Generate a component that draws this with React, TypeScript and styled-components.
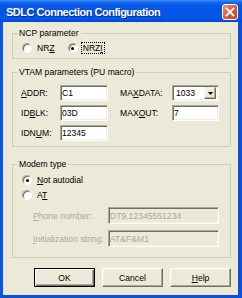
import React from "react";
import styled, { createGlobalStyle } from "styled-components";

const GlobalStyle = createGlobalStyle`
  html, body { margin: 0; padding: 0; background: #ffffff; }
  body { font-family: "Liberation Sans", Arial, sans-serif; }
  *, *::before, *::after { box-sizing: border-box; }
`;

const Window = styled.div`
  width: 242px;
  height: 298px;
  display: flex;
  flex-direction: column;
  background: linear-gradient(to right, #0831d9 0, #166aee 1px, #0a4fde 2px, #0a4fde 100%);
`;

const TitleBar = styled.div`
  height: 22px;
  flex: none;
  display: flex;
  align-items: center;
  justify-content: space-between;
  padding: 1px 4px 0 6px;
  background: linear-gradient(
    to bottom,
    #3d8ef5 0,
    #1a69ec 2px,
    #0659e8 5px,
    #0055e5 50%,
    #0057e9 85%,
    #0046d3 100%
  );
`;

const Title = styled.div`
  color: #ffffff;
  font-weight: bold;
  font-size: 11px;
  letter-spacing: -0.5px;
  text-shadow: 1px 1px 0 #0c2a9e;
  white-space: nowrap;
`;

const CloseButton = styled.div`
  width: 16px;
  height: 16px;
  border: 1px solid #ffffff;
  border-radius: 3px;
  background: linear-gradient(135deg, #f0906e 0%, #e1603d 45%, #c8401c 100%);
  display: flex;
  align-items: center;
  justify-content: center;
`;

const Body = styled.div`
  flex: 1;
  margin: 0 4px 3px 3px;
  background: #ece9d8;
  padding: 6px 7px 0 9px;
  display: flex;
  flex-direction: column;
  font-size: 8.6px;
  color: #000000;
`;

const Group = styled.fieldset<{ $mt: number }>`
  margin: ${(p) => p.$mt}px 0 0 0;
  padding: 0;
  border: 1px solid #cfcdbf;
  min-width: 0;
`;

const Legend = styled.legend`
  margin-left: 4px;
  padding: 0 2px;
  line-height: 10px;
  font-size: 8.6px;
`;

const RadioRow = styled.div`
  display: flex;
  align-items: center;
  gap: 11px;
  padding: 4px 0 4px 9px;
`;

const RadioList = styled.div`
  display: flex;
  flex-direction: column;
  gap: 3px;
  padding: 5px 0 0 9px;
`;

const RadioOption = styled.div`
  display: flex;
  align-items: center;
  gap: 3px;
  height: 12px;
`;

const RadioCircle = styled.span<{ $checked?: boolean }>`
  width: 10px;
  height: 10px;
  border-radius: 50%;
  background: #ffffff;
  border: 1px solid;
  border-color: #aca899 #ffffff #ffffff #aca899;
  box-shadow: inset 1px 1px 0 #716f64;
  display: inline-flex;
  align-items: center;
  justify-content: center;
  flex: none;
  &::after {
    content: "";
    width: 3px;
    height: 3px;
    border-radius: 50%;
    background: #000000;
    display: ${(p) => (p.$checked ? "block" : "none")};
  }
`;

const Caption = styled.span<{ $focus?: boolean }>`
  line-height: 10px;
  white-space: nowrap;
  padding: 0 1px;
  border: 1px dotted ${(p) => (p.$focus ? "#000000" : "transparent")};
`;

const ParamGrid = styled.div`
  display: grid;
  grid-template-columns: 39px 48px 64px 47px;
  grid-auto-rows: 16px;
  row-gap: 4px;
  align-items: center;
  padding: 8px 0 5px 8px;
`;

const FieldLabel = styled.span<{ $indent?: number; $disabled?: boolean }>`
  padding-left: ${(p) => p.$indent ?? 0}px;
  white-space: nowrap;
  line-height: 10px;
  color: ${(p) => (p.$disabled ? "#aca899" : "#000000")};
`;

const Edit = styled.input<{ $disabled?: boolean }>`
  width: 100%;
  height: 100%;
  margin: 0;
  padding: 0 1px;
  font-family: "Liberation Sans", Arial, sans-serif;
  font-size: 8.6px;
  color: ${(p) => (p.$disabled ? "#aca899" : "#000000")};
  background: ${(p) => (p.$disabled ? "#ece9d8" : "#ffffff")};
  border: 1px solid;
  border-color: #aca899 #ffffff #ffffff #aca899;
  box-shadow: inset 1px 1px 0 #716f64, inset -1px -1px 0 #f1efe2;
  outline: none;
`;

const Combo = styled.div`
  width: 100%;
  height: 100%;
  display: flex;
  align-items: center;
  justify-content: space-between;
  padding: 2px 2px 2px 3px;
  background: #ffffff;
  border: 1px solid;
  border-color: #aca899 #ffffff #ffffff #aca899;
  box-shadow: inset 1px 1px 0 #716f64, inset -1px -1px 0 #f1efe2;
`;

const ComboButton = styled.div`
  width: 12px;
  height: 12px;
  background: #ece9d8;
  border: 1px solid;
  border-color: #f1efe2 #716f64 #716f64 #f1efe2;
  box-shadow: inset -1px -1px 0 #aca899, inset 1px 1px 0 #ffffff;
  display: flex;
  align-items: center;
  justify-content: center;
`;

const DialGrid = styled.div`
  display: grid;
  grid-template-columns: 75px 111px;
  grid-auto-rows: 17px;
  row-gap: 6px;
  align-items: center;
  padding: 6px 0 10px 20px;
`;

const ButtonRow = styled.div`
  display: flex;
  justify-content: flex-end;
  gap: 7px;
  margin-top: 10px;
`;

const Button = styled.button<{ $default?: boolean }>`
  width: 61px;
  height: 19px;
  margin: 0;
  padding: 0;
  font-family: "Liberation Sans", Arial, sans-serif;
  font-size: 8.6px;
  color: #000000;
  background: #ece9d8;
  border: 1px solid;
  border-color: ${(p) => (p.$default ? "#000000" : "#ffffff #716f64 #716f64 #ffffff")};
  box-shadow: ${(p) =>
    p.$default
      ? "inset 1px 1px 0 #ffffff, inset -1px -1px 0 #716f64, inset -2px -2px 0 #aca899"
      : "inset -1px -1px 0 #aca899, inset 1px 1px 0 #f1efe2"};
`;

export default function App() {
  return (
    <>
      <GlobalStyle />
      <Window>
        <TitleBar>
          <Title>SDLC Connection Configuration</Title>
          <CloseButton>
            <svg width="10" height="10" viewBox="0 0 10 10">
              <path d="M1.5 1.5 L8.5 8.5 M8.5 1.5 L1.5 8.5" stroke="#ffffff" strokeWidth="1.8" strokeLinecap="square" />
            </svg>
          </CloseButton>
        </TitleBar>
        <Body>
          <Group $mt={0}>
            <Legend>NCP parameter</Legend>
            <RadioRow>
              <RadioOption>
                <RadioCircle />
                <Caption>
                  NR<u>Z</u>
                </Caption>
              </RadioOption>
              <RadioOption>
                <RadioCircle $checked />
                <Caption $focus>
                  NRZ<u>I</u>
                </Caption>
              </RadioOption>
            </RadioRow>
          </Group>

          <Group $mt={8}>
            <Legend>VTAM parameters (PU macro)</Legend>
            <ParamGrid>
              <FieldLabel>
                <u>A</u>DDR:
              </FieldLabel>
              <Edit readOnly defaultValue="C1" />
              <FieldLabel $indent={12}>
                MA<u>X</u>DATA:
              </FieldLabel>
              <Combo>
                <span>1033</span>
                <ComboButton>
                  <svg width="5" height="3" viewBox="0 0 5 3">
                    <path d="M0 0 H5 L2.5 3 Z" fill="#000000" />
                  </svg>
                </ComboButton>
              </Combo>

              <FieldLabel>
                ID<u>B</u>LK:
              </FieldLabel>
              <Edit readOnly defaultValue="03D" />
              <FieldLabel $indent={12}>
                MAX<u>O</u>UT:
              </FieldLabel>
              <Edit readOnly defaultValue="7" />

              <FieldLabel>
                IDN<u>U</u>M:
              </FieldLabel>
              <Edit readOnly defaultValue="12345" />
            </ParamGrid>
          </Group>

          <Group $mt={12}>
            <Legend>Modem type</Legend>
            <RadioList>
              <RadioOption>
                <RadioCircle $checked />
                <Caption>
                  <u>N</u>ot autodial
                </Caption>
              </RadioOption>
              <RadioOption>
                <RadioCircle />
                <Caption>
                  A<u>T</u>
                </Caption>
              </RadioOption>
            </RadioList>
            <DialGrid>
              <FieldLabel $disabled>
                <u>P</u>hone number:
              </FieldLabel>
              <Edit $disabled readOnly defaultValue="DT9,12345551234" />
              <FieldLabel $disabled>
                <u>I</u>nitialization string:
              </FieldLabel>
              <Edit $disabled readOnly defaultValue="AT&F&M1" />
            </DialGrid>
          </Group>

          <ButtonRow>
            <Button $default>OK</Button>
            <Button>Cancel</Button>
            <Button>
              <u>H</u>elp
            </Button>
          </ButtonRow>
        </Body>
      </Window>
    </>
  );
}
